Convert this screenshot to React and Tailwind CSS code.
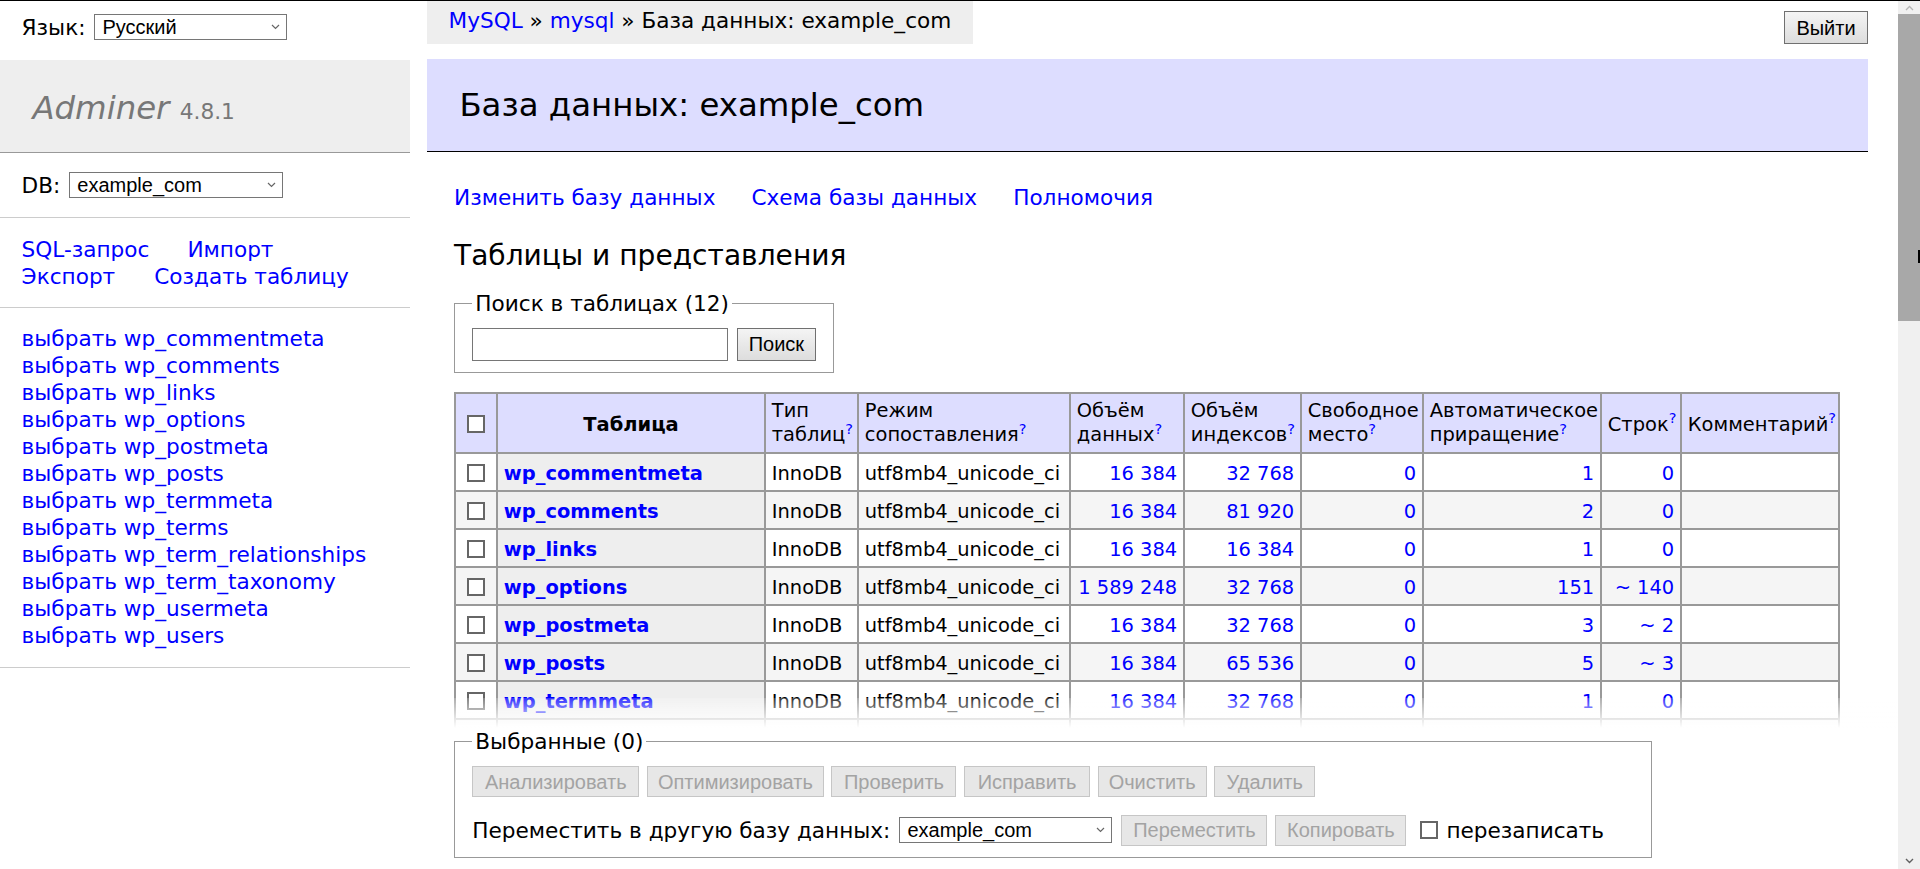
import React from "react";

const tables = [
  { name: "wp_commentmeta", data: "16 384", index: "32 768", free: "0", ai: "1", rows: "0" },
  { name: "wp_comments", data: "16 384", index: "81 920", free: "0", ai: "2", rows: "0" },
  { name: "wp_links", data: "16 384", index: "16 384", free: "0", ai: "1", rows: "0" },
  { name: "wp_options", data: "1 589 248", index: "32 768", free: "0", ai: "151", rows: "~ 140" },
  { name: "wp_postmeta", data: "16 384", index: "32 768", free: "0", ai: "3", rows: "~ 2" },
  { name: "wp_posts", data: "16 384", index: "65 536", free: "0", ai: "5", rows: "~ 3" },
  { name: "wp_termmeta", data: "16 384", index: "32 768", free: "0", ai: "1", rows: "0" },
  { name: "wp_terms", data: "16 384", index: "32 768", free: "0", ai: "2", rows: "~ 1" },
  { name: "wp_term_relationships", data: "16 384", index: "16 384", free: "0", ai: "", rows: "~ 1" },
  { name: "wp_term_taxonomy", data: "16 384", index: "32 768", free: "0", ai: "2", rows: "~ 1" },
  { name: "wp_usermeta", data: "16 384", index: "32 768", free: "0", ai: "19", rows: "~ 18" },
  { name: "wp_users", data: "16 384", index: "49 152", free: "0", ai: "2", rows: "~ 1" },
];

const actions = [
  ["Анализировать", "w-[167px]"],
  ["Оптимизировать", "w-[177px]"],
  ["Проверить", "w-[125px]"],
  ["Исправить", "w-[126px]"],
  ["Очистить", "w-[109px]"],
  ["Удалить", "w-[101px]"],
];

function Check({ className = "" }) {
  return <span className={"inline-block w-[18px] h-[18px] border-2 border-[#666] bg-white shrink-0 " + className} />;
}

function Help() {
  return <sup className="text-[#00f]">?</sup>;
}

// нативный select рисуем сами, чтобы не зависеть от темы браузера
function Select({ value, className = "" }) {
  return (
    <div className={"relative flex items-center h-[26px] border border-[#767676] bg-white pl-[7px] shrink-0 font-['Liberation_Sans',Arial,sans-serif] text-[20px] leading-[24px] " + className}>
      <span>{value}</span>
      <svg className="absolute right-[6px] top-[9px]" width="9" height="6" viewBox="0 0 9 6">
        <path d="M1 1l3.5 3.5L8 1" stroke="#666" strokeWidth="1.2" fill="none" />
      </svg>
    </div>
  );
}

function Button({ children, className = "" }) {
  return (
    <button className={"h-[33px] border border-[#707070] bg-linear-to-b from-[#f4f4f4] to-[#dddddd] text-black font-['Liberation_Sans',Arial,sans-serif] text-[20px] leading-[24px] shrink-0 " + className}>
      {children}
    </button>
  );
}

function DisabledButton({ children, className = "" }) {
  return (
    <button disabled className={"h-[31px] border border-[#c6c6c6] bg-[#e7e7e7] text-[#a3a3a3] font-['Liberation_Sans',Arial,sans-serif] text-[20px] leading-[24px] shrink-0 " + className}>
      {children}
    </button>
  );
}

function Sidebar() {
  return (
    <aside className="w-[410px] shrink-0">
      <div className="flex items-center h-[52px] px-[21.6px]">
        <span>Язык:</span>
        <Select value="Русский" className="ml-[9px] w-[193px]" />
      </div>
      <h1 className="mt-[6.5px] h-[93.3px] bg-[#eee] border-b border-[#999] px-[32.4px] pt-[28px] pb-[23.8px] text-[32.4px] leading-[40.5px] text-[#777] whitespace-nowrap">
        <a className="italic">Adminer</a> <span className="text-[21.7px] leading-none">4.8.1</span>
      </h1>
      <div className="px-[21.6px] py-[17.3px] border-b border-[#ccc]">
        <div className="flex items-center h-[30px]">
          <span>DB:</span>
          <Select value="example_com" className="ml-[9px] w-[214px]" />
        </div>
      </div>
      <div className="px-[21.6px] py-[17.3px] border-b border-[#ccc] text-[#00f]">
        <div className="flex gap-[38px]">
          <a>SQL-запрос</a>
          <a>Импорт</a>
        </div>
        <div className="flex gap-[39px]">
          <a>Экспорт</a>
          <a>Создать таблицу</a>
        </div>
      </div>
      <ul className="px-[21.6px] py-[17.3px] border-b border-[#ccc] text-[#00f] whitespace-nowrap">
        {tables.map((t) => (
          <li key={t.name}>
            <a>выбрать</a> <a>{t.name}</a>
          </li>
        ))}
      </ul>
    </aside>
  );
}

function TablesList() {
  const cell = "border-2 border-[#999] px-[5.8px] py-0";
  const body = "border-2 border-[#999] px-[5.8px] pt-[4px] pb-0";
  return (
    <table className="mt-[19.4px] border-collapse table-fixed w-[1386px] text-[19.44px] leading-[24.3px]">
      <colgroup>
        <col className="w-[42px]" />
        <col className="w-[268px]" />
        <col className="w-[93px]" />
        <col className="w-[212px]" />
        <col className="w-[114px]" />
        <col className="w-[117px]" />
        <col className="w-[122px]" />
        <col className="w-[178px]" />
        <col className="w-[80px]" />
        <col className="w-[158px]" />
      </colgroup>
      <thead>
        <tr className="h-[60px] bg-[#ddf] text-left whitespace-nowrap">
          <td className={cell + " pl-[11px]"}><Check className="align-middle" /></td>
          <th className={cell + " text-center font-bold pt-[3px]"}>Таблица</th>
          <td className={cell}>Тип<br />таблиц<Help /></td>
          <td className={cell}>Режим<br />сопоставления<Help /></td>
          <td className={cell}>Объём<br />данных<Help /></td>
          <td className={cell}>Объём<br />индексов<Help /></td>
          <td className={cell}>Свободное<br />место<Help /></td>
          <td className={cell}>Автоматическое<br />приращение<Help /></td>
          <td className={cell + " pt-[3px]"}>Строк<Help /></td>
          <td className={cell + " pt-[3px]"}>Комментарий<Help /></td>
        </tr>
      </thead>
      <tbody>
        {tables.map((t, i) => (
          <tr key={t.name} className={"h-[38px] whitespace-nowrap " + (i % 2 ? "bg-[#f5f5f5]" : "bg-white")}>
            <td className={cell + " pl-[11px]"}><Check className="align-middle" /></td>
            <th className={body + " bg-[#eee] text-left font-bold text-[#00f]"}>{t.name}</th>
            <td className={body}>InnoDB</td>
            <td className={body}>utf8mb4_unicode_ci</td>
            <td className={body + " text-right text-[#00f]"}>{t.data}</td>
            <td className={body + " text-right text-[#00f]"}>{t.index}</td>
            <td className={body + " text-right text-[#00f]"}>{t.free}</td>
            <td className={body + " text-right text-[#00f]"}>{t.ai}</td>
            <td className={body + " text-right text-[#00f]"}>{t.rows}</td>
            <td className={body}></td>
          </tr>
        ))}
      </tbody>
    </table>
  );
}

function Footer() {
  return (
    <div className="sticky bottom-0 -mr-[30px]">
      <div className="h-[30px] bg-linear-to-b from-white/20 to-white" />
      <div className="bg-white pb-[10.8px]">
        <fieldset className="block w-fit border border-[#999] px-[17.3px] pt-[10.8px] pb-[10.8px]">
          <legend className="px-[3px]">Выбранные (0)</legend>
          <div className="flex gap-[7.6px]">
            {actions.map(([label, w]) => (
              <DisabledButton key={label} className={w}>{label}</DisabledButton>
            ))}
          </div>
          <div className="mt-[17.3px] mr-[30px] flex items-center h-[32px]">
            <span>Переместить в другую базу данных:</span>
            <Select value="example_com" className="ml-[9px] w-[213px]" />
            <DisabledButton className="ml-[9px] w-[146px]">Переместить</DisabledButton>
            <DisabledButton className="ml-[8px] w-[131px]">Копировать</DisabledButton>
            <Check className="ml-[14px]" />
            <span className="ml-[8px]">перезаписать</span>
          </div>
        </fieldset>
      </div>
    </div>
  );
}

function Main() {
  return (
    <main className="ml-[17px] w-[1441px] shrink-0">
      <div className="flex justify-between items-start h-[43px]">
        <p className="bg-[#eee] h-[43px] px-[21.6px] leading-[39px] whitespace-nowrap">
          <a className="text-[#00f]">MySQL</a> » <a className="text-[#00f]">mysql</a> » База данных: example_com
        </p>
        <Button className="mt-[10px] w-[84px]">Выйти</Button>
      </div>
      <h2 className="mt-[15px] bg-[#ddf] border-b border-black px-[32.4px] py-[25.9px] text-[32.4px] leading-[40.5px]">
        База данных: example_com
      </h2>
      <div className="pl-[27px]">
        <p className="mt-[32px] flex gap-[36px] text-[#00f]">
          <a>Изменить базу данных</a>
          <a>Схема базы данных</a>
          <a>Полномочия</a>
        </p>
        <h3 className="mt-[26.5px] text-[28.08px] leading-[35.1px]">Таблицы и представления</h3>
        <fieldset className="mt-[17.3px] block w-fit border border-[#999] px-[17.3px] pt-[10.8px] pb-[10.8px]">
          <legend className="px-[3px]">Поиск в таблицах (12)</legend>
          <div className="flex items-center gap-[8.6px]">
            <input className="w-[256px] h-[33px] border border-[#767676] bg-white px-[3px]" />
            <Button className="w-[79px]">Поиск</Button>
          </div>
        </fieldset>
        <TablesList />
        <Footer />
      </div>
    </main>
  );
}

function Scrollbar() {
  return (
    <div className="relative w-[22px] shrink-0 bg-[#f0f0f0] flex flex-col">
      <div className="h-[13px] flex items-center justify-center">
        <svg width="9" height="6" viewBox="0 0 9 6"><path d="M1 5l3.5-3.5L8 5" stroke="#b4b4b4" strokeWidth="1.3" fill="none" /></svg>
      </div>
      <div className="h-[307px] bg-[#a8a8a8]" />
      <div className="flex-1" />
      <div className="h-[16px] flex items-center justify-center">
        <svg width="9" height="6" viewBox="0 0 9 6"><path d="M1 1l3.5 3.5L8 1" stroke="#606060" strokeWidth="1.4" fill="none" /></svg>
      </div>
      <div className="absolute right-0 top-[249px] w-[2px] h-[13px] bg-black" />
    </div>
  );
}

export default function App() {
  return (
    <div className="h-[869px] overflow-hidden flex flex-col bg-white text-black font-['DejaVu_Sans',Verdana,sans-serif] text-[21.6px] leading-[27px]">
      <div className="h-px shrink-0 bg-black" />
      <div className="flex flex-1 min-h-0">
        <div className="flex-1 overflow-hidden">
          <div className="flex items-start">
            <Sidebar />
            <Main />
          </div>
        </div>
        <Scrollbar />
      </div>
    </div>
  );
}
